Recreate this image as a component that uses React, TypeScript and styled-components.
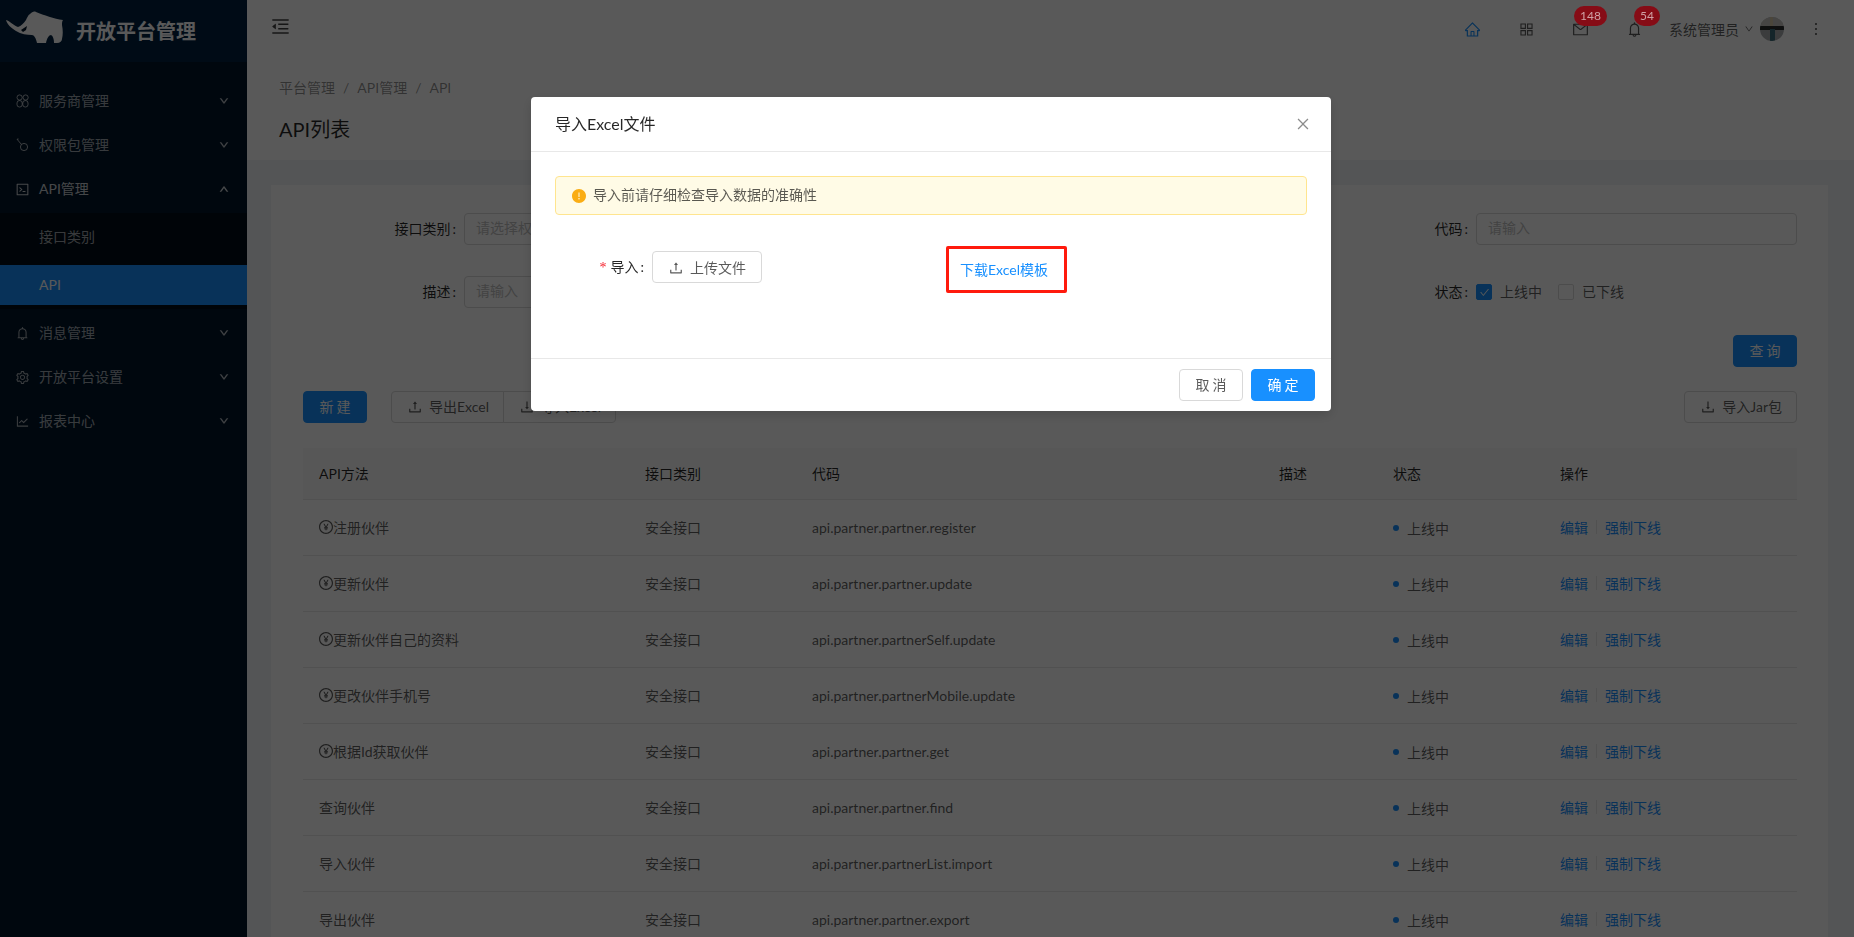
import React from 'react';
import styled, { createGlobalStyle } from 'styled-components';
import {
  AiOutlineMenuFold, AiOutlineHome, AiOutlineAppstore, AiOutlineMail, AiOutlineBell, AiOutlineDown, AiOutlineUp,
  AiOutlineMore, AiOutlineUpload, AiOutlineDownload, AiOutlineSetting, AiOutlineLineChart, AiOutlinePayCircle,
  AiOutlineCode, AiOutlineClose, AiFillExclamationCircle, AiOutlineCheck,
} from 'react-icons/ai';

const FONT = 'Lato, "Noto Sans CJK SC", "Noto Sans", sans-serif';

const Global = createGlobalStyle`
  html, body { margin: 0; padding: 0; height: 100%; overflow: hidden; }
  body { font-family: ${FONT}; font-size: 14px; color: rgba(0,0,0,.65); background: #f0f2f5; }
  * { box-sizing: border-box; }
`;

const Shell = styled.div`display: flex; height: 937px; overflow: hidden;`;

const Sider = styled.aside`width: 247px; flex: none; background: #001529; color: rgba(255,255,255,.65);`;
const LogoBar = styled.div`height: 62px; display: flex; align-items: center; background: #002140;`;
const LogoMark = styled.svg`width: 76px; height: 45px; flex: none; margin-top: -4px;`;
const LogoText = styled.span`font-size: 20px; font-weight: 700; color: #fff; line-height: 62px;`;

const MenuList = styled.nav`padding-top: 19px;`;
const MenuTitle = styled.div`
  height: 40px; margin-bottom: 4px; display: flex; align-items: center; padding: 0 16px;
  color: ${p => (p.$open ? 'rgba(255,255,255,.8)' : 'rgba(255,255,255,.65)')};
`;
const MenuIcon = styled.span`
  width: 12px; height: 14px; display: flex; align-items: center; justify-content: center; margin-right: 11px; font-size: 15px; flex: none;
  svg { flex: none; }
`;
const MenuLabel = styled.span`flex: 1; padding-bottom: 2px;`;
const Caret = styled.span`
  font-size: 10px; display: flex; margin-right: 2px; margin-top: -1px;
  svg { stroke: currentColor; stroke-width: 70; }
`;
const SubList = styled.div`background: #000c17; padding: 4px 0 4px; margin-bottom: 4px;`;
const SubItem = styled.div`
  height: 40px; line-height: 40px; padding-left: 39px; margin-bottom: 8px;
  background: ${p => (p.$active ? '#1890ff' : 'transparent')};
  color: ${p => (p.$active ? '#fff' : 'rgba(255,255,255,.65)')};
  &:last-child { margin-bottom: 0; }
`;

const Main = styled.div`flex: 1; min-width: 0; display: flex; flex-direction: column;`;
const TopBar = styled.header`height: 62px; flex: none; background: #fff; display: flex; align-items: center; padding: 0 29px 4px 23px; box-shadow: 0 1px 4px rgba(0,21,41,.08);`;
const Fold = styled.span`font-size: 21px; display: flex; color: rgba(0,0,0,.75); margin-top: -6px;`;
const Spacer = styled.div`flex: 1;`;
const TopIcon = styled.span`
  position: relative; width: 54px; display: flex; justify-content: center; font-size: 17px;
  color: ${p => (p.$active ? '#1890ff' : 'rgba(0,0,0,.65)')};
`;
const Badge = styled.span`
  position: absolute; top: -15px; left: ${p => p.$left}px; height: 20px; line-height: 20px; padding: 0 ${p => p.$pad}px;
  border-radius: 10px; background: #860c16; color: #cfa0a4; font-size: 12px; z-index: 2000;
`;
const UserName = styled.span`margin-left: 8px; color: rgba(0,0,0,.65); white-space: nowrap;`;
const UserCaret = styled.span`font-size: 10px; display: flex; margin: 0 6px 0 5px;`;
const Avatar = styled.svg`width: 24px; height: 24px; border-radius: 50%; flex: none;`;
const More = styled.span`font-size: 18px; display: flex; margin-left: 23px; color: rgba(0,0,0,.75);`;

const PageHead = styled.section`height: 98px; flex: none; background: #fff; padding: 16px 32px 0; `;
const Crumbs = styled.div`display: flex; gap: 8px; color: rgba(0,0,0,.45); line-height: 20px;`;
const PageTitle = styled.h1`margin: 15px 0 0; font-size: 20px; font-weight: 400; line-height: 32px; color: rgba(0,0,0,.85);`;

const Content = styled.main`flex: 1; padding: 25px 26px 0 24px; min-height: 0;`;
const Card = styled.div`background: #fff; padding: 28px 31px 0 32px; height: 1000px;`;

const Filters = styled.div`display: grid; grid-template-columns: 506px 506px 482px; row-gap: 31px;`;
const Field = styled.div`display: flex; align-items: center; height: 32px; padding-right: ${p => p.$pr || 0}px;`;
const FieldLabel = styled.label`width: 161px; flex: none; text-align: right; padding: 0 8px 2px 0; color: rgba(0,0,0,.85);`;
const Colon = styled.span`margin-left: 2px;`;
const Input = styled.div`flex: 1; height: 32px; border: 1px solid #d9d9d9; border-radius: 4px; padding: 0 11px; line-height: 28px; color: #bfbfbf;`;
const Check = styled.span`
  width: 16px; height: 16px; border-radius: 2px; display: inline-flex; align-items: center; justify-content: center; flex: none;
  background: ${p => (p.$on ? '#1890ff' : '#fff')}; border: 1px solid ${p => (p.$on ? '#1890ff' : '#d9d9d9')}; color: #fff; font-size: 11px;
`;
const CheckText = styled.span`margin: 0 16px 2px 8px; color: rgba(0,0,0,.65);`;

const QueryRow = styled.div`display: flex; justify-content: flex-end; margin-top: 27px;`;
const Toolbar = styled.div`display: flex; align-items: center; margin-top: 24px;`;
const Primary = styled.button`
  width: 64px; height: 32px; border: 1px solid #1890ff; background: #1890ff; color: #fff; border-radius: 4px; font: inherit; letter-spacing: 3px; padding: 0 0 2px 3px; cursor: pointer; white-space: nowrap;
`;
const Ghost = styled.button`
  height: 32px; border: 1px solid #d9d9d9; background: #fff; border-radius: ${p => p.$radius || '4px'}; font: inherit; color: rgba(0,0,0,.65); padding: 0 14px 2px 15px; display: inline-flex; align-items: center; gap: 6px; margin-left: ${p => p.$ml || 0}px; cursor: pointer; white-space: nowrap;
  svg { font-size: 16px; flex: none; margin-bottom: -2px; }
`;
const Grow = styled.div`flex: 1;`;

const Table = styled.div`margin-top: 25px;`;
const Row = styled.div`
  display: grid; grid-template-columns: 326px 167px 467px 114px 167px 253px; height: ${p => (p.$head ? '52px' : '56px')};
  align-items: center; border-bottom: 1px solid #e8e8e8; background: ${p => (p.$head ? '#fafafa' : '#fff')};
  color: ${p => (p.$head ? 'rgba(0,0,0,.85)' : 'rgba(0,0,0,.65)')};
`;
const Cell = styled.div`padding: 0 16px ${p => (p.$flat ? 0 : 2)}px; display: flex; align-items: center; white-space: nowrap;`;
const Pay = styled.span`font-size: 16px; display: flex; margin: 0 -1px -1px -1px;`;
const Dot = styled.span`width: 6px; height: 6px; border-radius: 50%; background: #1890ff; margin-right: 8px; margin-top: 2px;`;
const StatusText = styled.span`margin-top: 2px;`;
const Link = styled.a`color: #1890ff; cursor: pointer;`;
const VBar = styled.span`width: 1px; height: 14px; background: #e8e8e8; margin: 0 8px;`;

const Mask = styled.div`position: fixed; inset: 0; background: rgba(0,0,0,.65); z-index: 1000;`;
const Modal = styled.div`
  position: fixed; left: 531px; top: 97px; width: 800px; height: 314px; background: #fff; border-radius: 4px; z-index: 1001;
  display: flex; flex-direction: column; box-shadow: 0 4px 12px rgba(0,0,0,.15);
`;
const ModalHead = styled.div`height: 55px; flex: none; border-bottom: 1px solid #e8e8e8; padding: 0 24px; display: flex; align-items: center; justify-content: space-between; color: rgba(0,0,0,.85);`;
const ModalTitle = styled.span`font-size: 16px; margin-top: -3px;`;
const CloseBtn = styled.span`font-size: 16px; display: flex; color: rgba(0,0,0,.45); margin-right: -4px;`;
const ModalBody = styled.div`flex: 1; padding: 24px 24px 0;`;
const Alert = styled.div`height: 39px; background: #fffbe6; border: 1px solid #ffe58f; border-radius: 4px; display: flex; align-items: center; padding: 0 0 3px 15px; color: rgba(0,0,0,.65);`;
const AlertIcon = styled.span`font-size: 16px; display: flex; color: #faad14; margin: 0 6px -3px 0;`;
const ImportRow = styled.div`display: flex; margin-top: 36px; align-items: flex-start;`;
const ImportLabel = styled.label`width: 97px; flex: none; text-align: right; padding-right: 8px; line-height: 32px; color: rgba(0,0,0,.85);`;
const Star = styled.span`color: #f5222d; margin-right: 4px; font-family: "Liberation Serif", serif; font-size: 14px;`;
const UploadBtn = styled(Ghost)`width: 110px; justify-content: center; padding: 0;`;
const TemplateBox = styled.div`
  width: 121px; height: 47px; border: 3px solid #ff1a0d; border-radius: 2px; margin: -5px 0 0 184px; padding: 0 0 2px 11px; display: flex; align-items: center; color: #1890ff; white-space: nowrap;
`;
const ModalFoot = styled.div`height: 53px; flex: none; border-top: 1px solid #e8e8e8; padding: 10px 16px 0 0; display: flex; justify-content: flex-end; gap: 8px;`;
const CancelBtn = styled(Ghost)`width: 64px; justify-content: center; letter-spacing: 3px; padding: 0 0 2px 3px;`;

const Rhino = () => (
  <LogoMark viewBox="0 10 76 45">
    <path fill="#fff" d="M6 23 C10 24 13 28 18 30 C21 29 24 26 26 23 C27 21 28 18 30 17 C32 15 34 14 36 15 C44 18 54 22 63 23 C62 24 62 26 62 28 C63 33 63 38 62 42 C62 44 60 46 57 46 L54 46 C54 42 53 39 51 38 C49 38 47 41 46 46 L37 46 C36 41 34 38 32 38 C27 38 21 37 16 34 C11 31 7 27 6 23 Z" />
    <path fill="#001529" d="M21 33 L27 29 L26 33 L23 35 Z" />
  </LogoMark>
);

const PartnerIcon = () => (
  <svg width="13" height="14" viewBox="0 0 13 14" fill="none" stroke="currentColor" strokeWidth="1">
    <circle cx="3.6" cy="3.5" r="2.6" /><circle cx="9.6" cy="3.5" r="2.6" />
    <rect x="1" y="6.6" width="5.2" height="6.4" rx="2.4" /><rect x="6.8" y="6.6" width="5.2" height="6.4" rx="2.4" />
  </svg>
);
const KeyIcon = () => (
  <svg width="13" height="14" viewBox="0 0 13 14" fill="none" stroke="currentColor" strokeWidth="1">
    <circle cx="8" cy="9" r="3.6" /><path d="M5.4 6.4 L1 1.2 M1 1.2 L2.6 1" />
  </svg>
);

const AppAvatar = () => (
  <Avatar viewBox="0 0 24 24">
    <rect width="24" height="24" fill="#a9adb0" />
    <rect y="0" width="24" height="9" fill="#c9c7c2" />
    <rect x="10" y="0" width="3" height="12" fill="#d8c8a8" />
    <rect y="9" width="24" height="4" fill="#2a2c2d" />
    <rect x="10" y="12" width="5" height="12" fill="#3a6a78" />
  </Avatar>
);

const ROWS: [boolean, string, string][] = [
  [true, '注册伙伴', 'api.partner.partner.register'],
  [true, '更新伙伴', 'api.partner.partner.update'],
  [true, '更新伙伴自己的资料', 'api.partner.partnerSelf.update'],
  [true, '更改伙伴手机号', 'api.partner.partnerMobile.update'],
  [true, '根据Id获取伙伴', 'api.partner.partner.get'],
  [false, '查询伙伴', 'api.partner.partner.find'],
  [false, '导入伙伴', 'api.partner.partnerList.import'],
  [false, '导出伙伴', 'api.partner.partner.export'],
];

const Nav = ({ icon, label, open }: { icon: React.ReactNode; label: string; open?: boolean }) => (
  <MenuTitle $open={open}>
    <MenuIcon>{icon}</MenuIcon>
    <MenuLabel>{label}</MenuLabel>
    <Caret>{open ? <AiOutlineUp /> : <AiOutlineDown />}</Caret>
  </MenuTitle>
);

export default function App() {
  return (
    <>
      <Global />
      <Shell>
        <Sider>
          <LogoBar><Rhino /><LogoText>开放平台管理</LogoText></LogoBar>
          <MenuList>
            <Nav icon={<PartnerIcon />} label="服务商管理" />
            <Nav icon={<KeyIcon />} label="权限包管理" />
            <Nav icon={<AiOutlineCode />} label="API管理" open />
            <SubList>
              <SubItem>接口类别</SubItem>
              <SubItem $active>API</SubItem>
            </SubList>
            <Nav icon={<AiOutlineBell />} label="消息管理" />
            <Nav icon={<AiOutlineSetting />} label="开放平台设置" />
            <Nav icon={<AiOutlineLineChart />} label="报表中心" />
          </MenuList>
        </Sider>
        <Main>
          <TopBar>
            <Fold><AiOutlineMenuFold /></Fold>
            <Spacer />
            <TopIcon $active><AiOutlineHome /></TopIcon>
            <TopIcon><AiOutlineAppstore /></TopIcon>
            <TopIcon><AiOutlineMail /><Badge $left={21} $pad={6}>148</Badge></TopIcon>
            <TopIcon><AiOutlineBell /><Badge $left={27} $pad={6}>54</Badge></TopIcon>
            <UserName>系统管理员</UserName>
            <UserCaret><AiOutlineDown /></UserCaret>
            <AppAvatar />
            <More><AiOutlineMore /></More>
          </TopBar>
          <PageHead>
            <Crumbs><span>平台管理</span><span>/</span><span>API管理</span><span>/</span><span>API</span></Crumbs>
            <PageTitle>API列表</PageTitle>
          </PageHead>
          <Content>
            <Card>
              <Filters>
                <Field $pr={16}><FieldLabel>接口类别<Colon>:</Colon></FieldLabel><Input>请选择权限包</Input></Field>
                <Field $pr={16}><FieldLabel>API方法<Colon>:</Colon></FieldLabel><Input>请输入</Input></Field>
                <Field><FieldLabel>代码<Colon>:</Colon></FieldLabel><Input>请输入</Input></Field>
                <Field $pr={16}><FieldLabel>描述<Colon>:</Colon></FieldLabel><Input>请输入</Input></Field>
                <Field $pr={16} />
                <Field>
                  <FieldLabel>状态<Colon>:</Colon></FieldLabel>
                  <Check $on><AiOutlineCheck /></Check><CheckText>上线中</CheckText>
                  <Check /><CheckText>已下线</CheckText>
                </Field>
              </Filters>
              <QueryRow><Primary>查询</Primary></QueryRow>
              <Toolbar>
                <Primary>新建</Primary>
                <Ghost $ml={24} $radius="4px 0 0 4px"><AiOutlineUpload />导出Excel</Ghost>
                <Ghost $ml={-1} $radius="0 4px 4px 0"><AiOutlineDownload />导入Excel</Ghost>
                <Grow />
                <Ghost><AiOutlineDownload />导入Jar包</Ghost>
              </Toolbar>
              <Table>
                <Row $head>
                  <Cell>API方法</Cell><Cell>接口类别</Cell><Cell>代码</Cell><Cell>描述</Cell><Cell>状态</Cell><Cell>操作</Cell>
                </Row>
                {ROWS.map(([pay, name, code]) => (
                  <Row key={code}>
                    <Cell>{pay && <Pay><AiOutlinePayCircle /></Pay>}{name}</Cell>
                    <Cell>安全接口</Cell>
                    <Cell $flat>{code}</Cell>
                    <Cell />
                    <Cell><Dot /><StatusText>上线中</StatusText></Cell>
                    <Cell><Link>编辑</Link><VBar /><Link>强制下线</Link></Cell>
                  </Row>
                ))}
              </Table>
            </Card>
          </Content>
        </Main>
      </Shell>
      <Mask />
      <Modal>
        <ModalHead>
          <ModalTitle>导入Excel文件</ModalTitle>
          <CloseBtn><AiOutlineClose /></CloseBtn>
        </ModalHead>
        <ModalBody>
          <Alert><AlertIcon><AiFillExclamationCircle /></AlertIcon>导入前请仔细检查导入数据的准确性</Alert>
          <ImportRow>
            <ImportLabel><Star>*</Star>导入<Colon>:</Colon></ImportLabel>
            <UploadBtn><AiOutlineUpload />上传文件</UploadBtn>
            <TemplateBox>下载Excel模板</TemplateBox>
          </ImportRow>
        </ModalBody>
        <ModalFoot>
          <CancelBtn>取消</CancelBtn>
          <Primary>确定</Primary>
        </ModalFoot>
      </Modal>
    </>
  );
}
